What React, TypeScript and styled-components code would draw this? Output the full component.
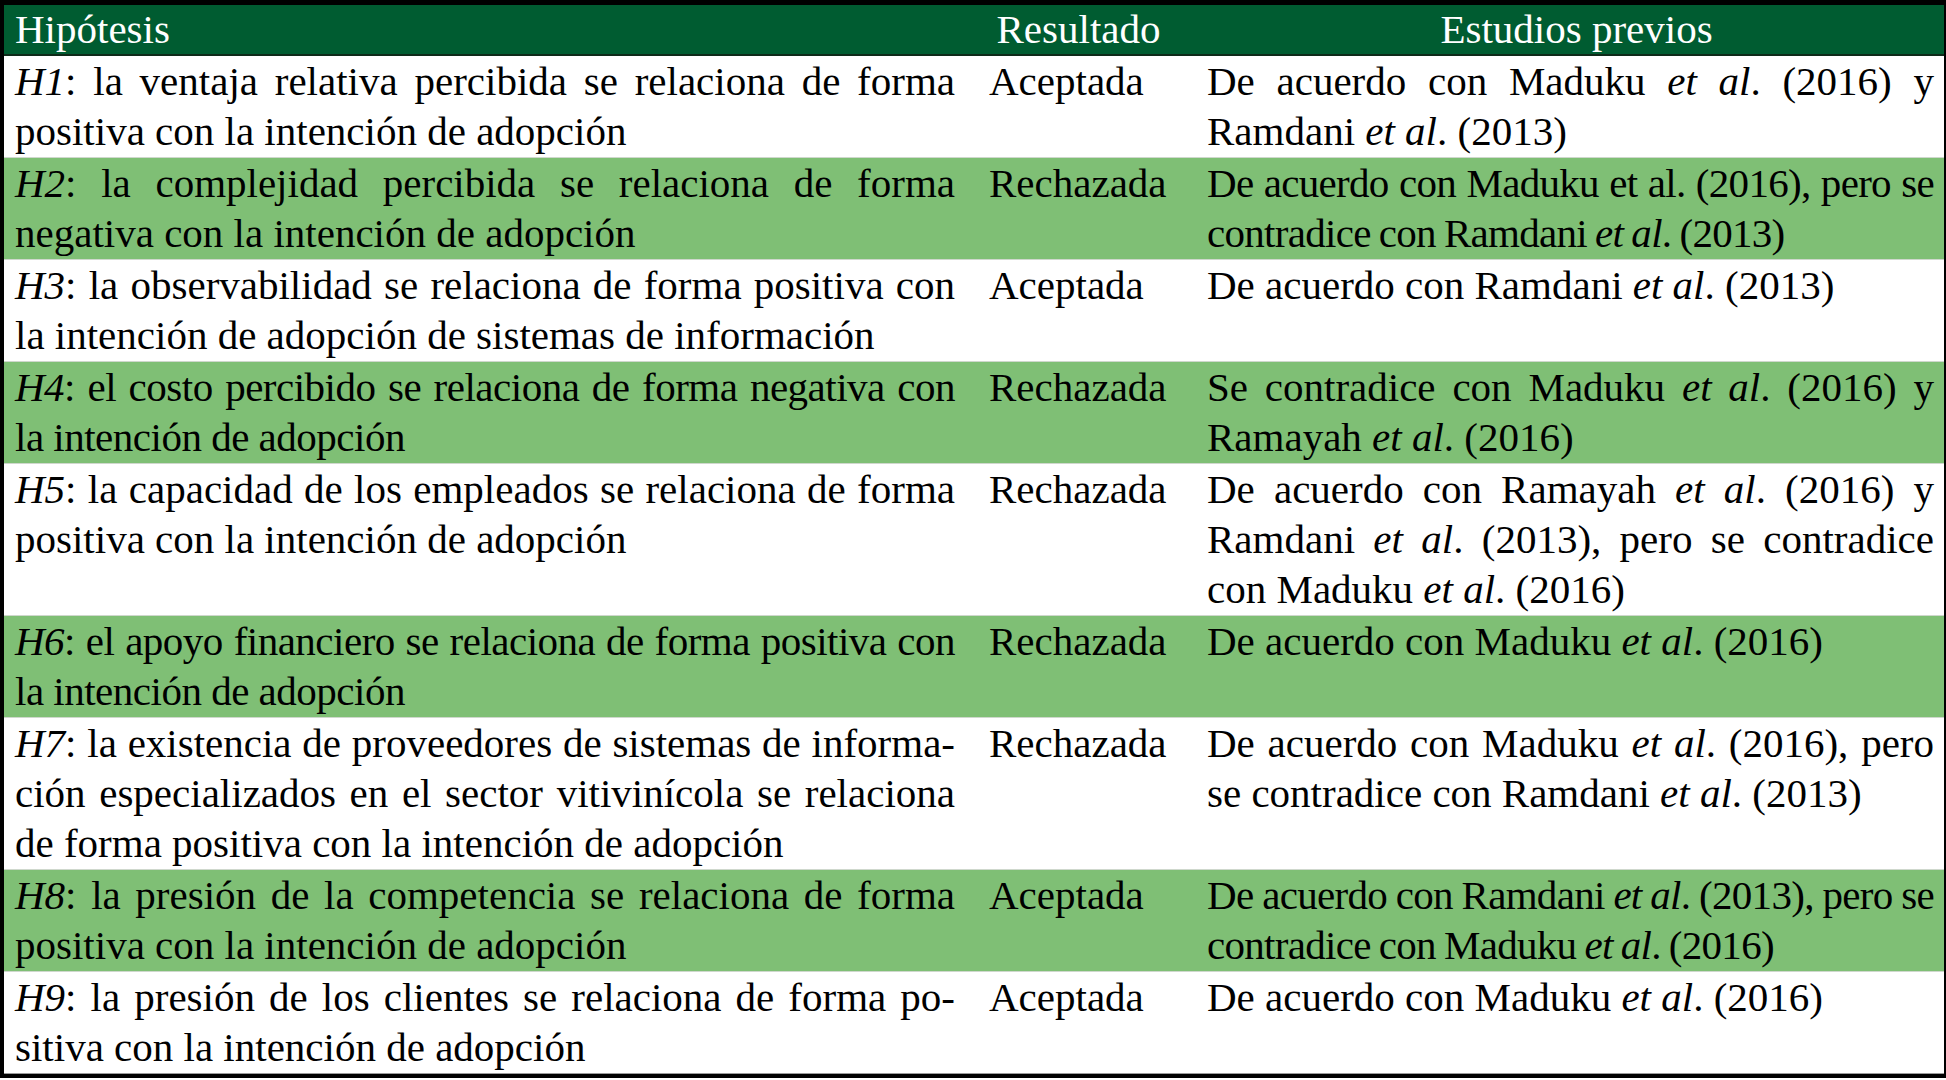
import React from 'react';
import styled, { createGlobalStyle } from 'styled-components';

const GlobalStyle = createGlobalStyle`
  html, body {
    margin: 0;
    padding: 0;
    background: #ffffff;
  }
  body {
    font-family: "Liberation Serif", "Times New Roman", serif;
  }
`;

const Table = styled.div`
  width: 1946px;
  box-sizing: border-box;
  border-top: 5px solid #000;
  border-bottom: 4px solid #000;
  border-left: 4px solid #000;
  border-right: 2px solid #000;
  font-size: 41px;
  line-height: 50px;
  color: #000;
`;

const Row = styled.div<{ $green?: boolean }>`
  display: grid;
  grid-template-columns: 958px 233px 1fr;
  background: ${p => (p.$green ? '#7fbf75' : '#ffffff')};
  padding-bottom: 1px;
  border-bottom: 1px solid #cfd8cd;
  &:last-child {
    border-bottom-color: #9a9a9a;
  }
`;

const HeaderRow = styled.div`
  display: grid;
  grid-template-columns: 958px 233px 1fr;
  background: #005c31;
  color: #ffffff;
  line-height: 49px;
  border-bottom: 2px solid #0e2a19;
`;

const HeadCell = styled.div<{ $align?: 'left' | 'center'; $shift?: number }>`
  text-align: ${p => p.$align || 'left'};
  padding-left: ${p => (p.$align === 'center' ? `${p.$shift || 0}px` : '11px')};
  padding-right: ${p => (p.$align === 'center' ? '0' : '7px')};
  white-space: nowrap;
`;

const HypCell = styled.div<{ $tight?: boolean }>`
  padding: 0 7px 0 11px;
  text-align: justify;
  hyphens: manual;
  letter-spacing: ${p => (p.$tight ? '-0.5px' : 'normal')};
`;

const ResultCell = styled.div`
  padding: 0 0 0 27px;
  white-space: nowrap;
`;

const StudyCell = styled.div<{ $tight?: boolean }>`
  padding: 0 10px 0 12px;
  text-align: justify;
  letter-spacing: ${p => (p.$tight ? '-0.7px' : 'normal')};
  word-spacing: ${p => (p.$tight ? '-1.5px' : 'normal')};
`;

const Em = styled.i`
  font-style: italic;
`;

type Item = {
  hyp: React.ReactNode;
  result: string;
  study: React.ReactNode;
  tightHyp?: boolean;
  tightStudy?: boolean;
};

const EtAl = () => (
  <>
    <Em>et al</Em>.
  </>
);

const rows: Item[] = [
  {
    hyp: (
      <>
        <Em>H1</Em>: la ventaja relativa percibida se relaciona de forma positiva con la intención de adopción
      </>
    ),
    result: 'Aceptada',
    study: (
      <>
        De acuerdo con Maduku <EtAl /> (2016) y Ramdani <EtAl /> (2013)
      </>
    ),
  },
  {
    hyp: (
      <>
        <Em>H2</Em>: la complejidad percibida se relaciona de forma negativa con la intención de adopción
      </>
    ),
    result: 'Rechazada',
    study: (
      <>
        De acuerdo con Maduku et al. (2016), pero se contradice con Ramdani <EtAl /> (2013)
      </>
    ),
    tightStudy: true,
  },
  {
    hyp: (
      <>
        <Em>H3</Em>: la observabilidad se relaciona de forma positiva con la intención de adopción de sistemas de
        información
      </>
    ),
    result: 'Aceptada',
    study: (
      <>
        De acuerdo con Ramdani <EtAl /> (2013)
      </>
    ),
  },
  {
    hyp: (
      <>
        <Em>H4</Em>: el costo percibido se relaciona de forma negativa con la intención de adopción
      </>
    ),
    result: 'Rechazada',
    study: (
      <>
        Se contradice con Maduku <EtAl /> (2016) y Ramayah <EtAl /> (2016)
      </>
    ),
    tightHyp: true,
  },
  {
    hyp: (
      <>
        <Em>H5</Em>: la capacidad de los empleados se relaciona de forma positiva con la intención de adopción
      </>
    ),
    result: 'Rechazada',
    study: (
      <>
        De acuerdo con Ramayah <EtAl /> (2016) y Ramdani <EtAl /> (2013), pero se contradice con Maduku <EtAl />{' '}
        (2016)
      </>
    ),
  },
  {
    hyp: (
      <>
        <Em>H6</Em>: el apoyo financiero se relaciona de forma positiva con la intención de adopción
      </>
    ),
    result: 'Rechazada',
    study: (
      <>
        De acuerdo con Maduku <EtAl /> (2016)
      </>
    ),
    tightHyp: true,
  },
  {
    hyp: (
      <>
        <Em>H7</Em>: la existencia de proveedores de sistemas de informa{'\u00AD'}ción especializados en el sector
        vitivinícola se relaciona de forma positiva con la intención de adopción
      </>
    ),
    result: 'Rechazada',
    study: (
      <>
        De acuerdo con Maduku <EtAl /> (2016), pero se contradice con Ramdani <EtAl /> (2013)
      </>
    ),
  },
  {
    hyp: (
      <>
        <Em>H8</Em>: la presión de la competencia se relaciona de forma positiva con la intención de adopción
      </>
    ),
    result: 'Aceptada',
    study: (
      <>
        De acuerdo con Ramdani <EtAl /> (2013), pero se contradice con Maduku <EtAl /> (2016)
      </>
    ),
    tightStudy: true,
  },
  {
    hyp: (
      <>
        <Em>H9</Em>: la presión de los clientes se relaciona de forma po{'\u00AD'}sitiva con la intención de adopción
      </>
    ),
    result: 'Aceptada',
    study: (
      <>
        De acuerdo con Maduku <EtAl /> (2016)
      </>
    ),
  },
];

export default function App() {
  return (
    <>
      <GlobalStyle />
      <Table>
        <HeaderRow>
          <HeadCell>Hipótesis</HeadCell>
          <HeadCell $align="center">Resultado</HeadCell>
          <HeadCell $align="center" $shift={14}>
            Estudios previos
          </HeadCell>
        </HeaderRow>
        {rows.map((r, i) => (
          <Row key={i} $green={i % 2 === 1}>
            <HypCell $tight={r.tightHyp}>{r.hyp}</HypCell>
            <ResultCell>{r.result}</ResultCell>
            <StudyCell $tight={r.tightStudy}>{r.study}</StudyCell>
          </Row>
        ))}
      </Table>
    </>
  );
}
